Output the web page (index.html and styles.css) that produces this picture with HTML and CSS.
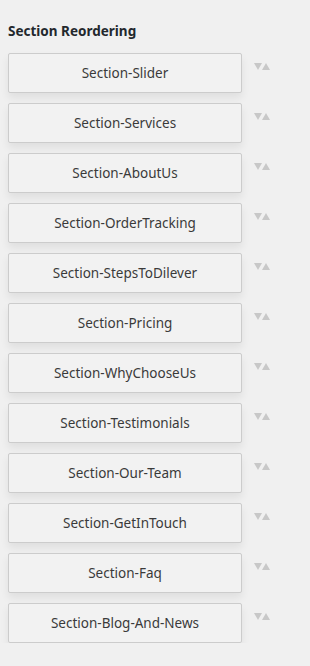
FILE: index.html
```html
<!DOCTYPE html>
<html lang="en">
<head>
  <meta charset="UTF-8" />
  <meta name="viewport" content="width=device-width, initial-scale=1.0"/>
  <title>Section Reordering</title>
  <link rel="stylesheet" href="styles.css">
</head>
<body>
  <div class="reorder-panel">
    <h3>Section Reordering</h3>

    <ul class="section-list">
      <li><span class="section-item">Section-Slider</span><span class="sort-arrows"><i class="down"></i><i class="up"></i></span></li>
      <li><span class="section-item">Section-Services</span><span class="sort-arrows"><i class="down"></i><i class="up"></i></span></li>
      <li><span class="section-item">Section-AboutUs</span><span class="sort-arrows"><i class="down"></i><i class="up"></i></span></li>
      <li><span class="section-item">Section-OrderTracking</span><span class="sort-arrows"><i class="down"></i><i class="up"></i></span></li>
      <li><span class="section-item">Section-StepsToDilever</span><span class="sort-arrows"><i class="down"></i><i class="up"></i></span></li>
      <li><span class="section-item">Section-Pricing</span><span class="sort-arrows"><i class="down"></i><i class="up"></i></span></li>
      <li><span class="section-item">Section-WhyChooseUs</span><span class="sort-arrows"><i class="down"></i><i class="up"></i></span></li>
      <li><span class="section-item">Section-Testimonials</span><span class="sort-arrows"><i class="down"></i><i class="up"></i></span></li>
      <li><span class="section-item">Section-Our-Team</span><span class="sort-arrows"><i class="down"></i><i class="up"></i></span></li>
      <li><span class="section-item">Section-GetInTouch</span><span class="sort-arrows"><i class="down"></i><i class="up"></i></span></li>
      <li><span class="section-item">Section-Faq</span><span class="sort-arrows"><i class="down"></i><i class="up"></i></span></li>
      <li><span class="section-item">Section-Blog-And-News</span><span class="sort-arrows"><i class="down"></i><i class="up"></i></span></li>
    </ul>
  </div>
</body>
</html>
```

FILE: styles.css
```css
body {
  font-family: 'Noto Sans', 'Open Sans', sans-serif;
  margin: 0;
  padding: 0 8px;
  background-color: #f0f0f0;
  color: #333;
}

.reorder-panel {
  padding-top: 22px;
}

h3 {
  margin: 0 0 13px;
  font-size: 13.5px;
  font-weight: bold;
  line-height: 18px;
  color: #23282d;
}

.section-list {
  list-style: none;
  margin: 0;
  padding: 0;
  display: flex;
  flex-direction: column;
  gap: 10px;
}

.section-list li {
  display: flex;
  align-items: flex-start;
}

.section-item {
  display: flex;
  align-items: center;
  justify-content: center;
  width: 234px;
  height: 40px;
  box-sizing: border-box;
  background: #f2f2f2;
  border: 1px solid #ccc;
  border-radius: 2px;
  box-shadow: 0 5px 8px rgba(0, 0, 0, 0.07);
  font-size: 13.5px;
  color: #3a3a3a;
}

.sort-arrows {
  display: flex;
  margin: 10px 0 0 12px;
}

.sort-arrows i {
  display: block;
  width: 0;
  height: 0;
  border-left: 4.5px solid transparent;
  border-right: 4.5px solid transparent;
}

.sort-arrows .down {
  border-top: 7px solid #c8c8c8;
}

.sort-arrows .up {
  margin-left: -0.5px;
  border-bottom: 7px solid #c8c8c8;
}
```
